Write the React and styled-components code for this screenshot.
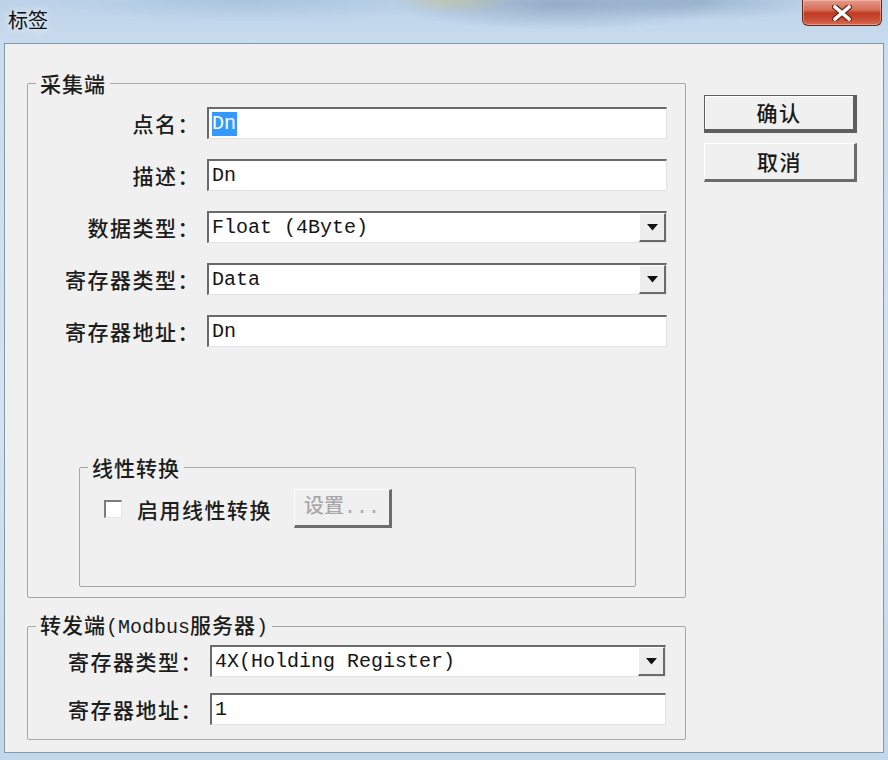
import React from 'react';
import styled, { createGlobalStyle, css } from 'styled-components';

const CJK = `"Noto Sans CJK SC", "Noto Sans", sans-serif`;
const MONO = `"Liberation Mono", "Noto Sans CJK SC", monospace`;

const GlobalStyle = createGlobalStyle`
  html, body {
    margin: 0;
    padding: 0;
  }
  body {
    width: 888px;
    height: 760px;
    overflow: hidden;
    background: #c4d8ec;
    font-family: ${CJK};
  }
`;

const Window = styled.div`
  width: 888px;
  height: 760px;
  display: flex;
  flex-direction: column;
  background:
    radial-gradient(ellipse 170px 26px at 560px 4px, rgba(70, 100, 140, 0.35), transparent),
    radial-gradient(ellipse 120px 18px at 700px 2px, rgba(90, 120, 160, 0.3), transparent),
    radial-gradient(ellipse 60px 14px at 455px 0px, rgba(230, 210, 120, 0.45), transparent),
    radial-gradient(ellipse 200px 22px at 250px 0px, rgba(150, 180, 215, 0.5), transparent),
    linear-gradient(180deg, #bcd2e8 0%, #cadcee 6%, #d3e3f2 55%, #c3d7eb 100%);
`;

const TitleBar = styled.div`
  height: 43px;
  flex: none;
  display: flex;
  align-items: flex-start;
  justify-content: space-between;
  padding: 0 6px 0 8px;
  box-sizing: border-box;
`;

const Title = styled.div`
  margin-top: 8px;
  font: 400 20px/24px ${CJK};
  color: #101010;
  text-shadow: 0 0 8px rgba(255, 255, 255, 0.95);
`;

const CloseButton = styled.div`
  width: 80px;
  height: 26px;
  box-sizing: border-box;
  display: flex;
  align-items: center;
  justify-content: center;
  border: 1px solid #5d2a22;
  border-top: none;
  border-radius: 0 0 6px 6px;
  background: linear-gradient(180deg, #e39a88 0%, #d66e56 40%, #bf3a23 52%, #cb4f37 80%, #d96f53 100%);
  box-shadow: inset 0 0 0 1px rgba(255, 210, 200, 0.45);
`;

const Client = styled.div`
  flex: 1;
  margin: 0 4px 7px 4px;
  border: 1px solid #8397ad;
  background: #f0f0f0;
  display: flex;
  align-items: flex-start;
  gap: 18px;
  padding: 28px 0 0 22px;
  box-sizing: border-box;
`;

const LeftColumn = styled.div`
  width: 659px;
  display: flex;
  flex-direction: column;
  gap: 15px;
`;

const RightColumn = styled.div`
  margin-top: 23px;
  display: flex;
  flex-direction: column;
  gap: 10px;
`;

const GroupBox = styled.fieldset`
  margin: 0;
  min-width: 0;
  box-sizing: border-box;
  width: ${(p) => p.$width}px;
  margin-left: ${(p) => p.$left || 0}px;
  margin-top: ${(p) => p.$top || 0}px;
  padding: ${(p) => p.$pad};
  border: 1px solid #a7a7a7;
  border-radius: 2px;
`;

const Legend = styled.legend`
  margin-left: 8px;
  padding: 0 4px;
  font: 500 21px/22px ${CJK};
  letter-spacing: 1px;
  color: #1c1c1c;
`;

const Ascii = styled.span`
  font: 500 20px/22px ${MONO};
  letter-spacing: 0;
`;

const FormGrid = styled.div`
  display: grid;
  grid-template-columns: ${(p) => p.$label}px ${(p) => p.$field}px;
  column-gap: 7px;
  row-gap: ${(p) => p.$gap}px;
  align-items: center;
`;

const Label = styled.label`
  text-align: right;
  white-space: nowrap;
  font: 500 21px/32px ${CJK};
  letter-spacing: 1.5px;
  color: #1c1c1c;
`;

const TextBox = styled.div`
  height: 32px;
  box-sizing: border-box;
  display: flex;
  align-items: center;
  background: #fff;
  border-style: solid;
  border-width: 2px 1px 1px 2px;
  border-color: #6a6a6a #e2e2e2 #e2e2e2 #6a6a6a;
  padding-left: 3px;
  font: 20px/28px ${MONO};
  color: #151515;
  white-space: pre;
`;

const Selected = styled.span`
  background: #3399ff;
  color: #fff;
  line-height: 24px;
  padding-right: 1px;
`;

const ComboText = styled.span`
  flex: 1;
`;

const DropArrow = styled.span`
  width: 27px;
  align-self: stretch;
  box-sizing: border-box;
  display: flex;
  align-items: center;
  justify-content: center;
  background: #ededed;
  border-style: solid;
  border-width: 1px 2px 2px 1px;
  border-color: #ffffff #6a6a6a #6a6a6a #ffffff;
`;

const PushButton = styled.button`
  width: ${(p) => p.$w}px;
  height: ${(p) => p.$h}px;
  box-sizing: border-box;
  padding: 0;
  background: #f0f0f0;
  font: 500 21px/1 ${CJK};
  letter-spacing: 1.5px;
  color: #1a1a1a;
  border-style: solid;
  border-width: 1px 3px 3px 1px;
  border-color: #ffffff #6c6c6c #6c6c6c #ffffff;
  ${(p) =>
    p.$default &&
    css`
      border-width: 1px 4px 4px 1px;
      border-color: #5e5e5e;
      box-shadow: inset 1px 1px 0 #ffffff;
    `}
  ${(p) =>
    p.disabled &&
    css`
      color: #a8a8a8;
      font-family: ${MONO};
      font-size: 20px;
      letter-spacing: 0;
    `}
`;

const CheckRow = styled.div`
  display: flex;
  align-items: center;
  padding-left: 24px;
`;

const CheckBox = styled.span`
  width: 18px;
  height: 18px;
  box-sizing: border-box;
  background: #fff;
  border-style: solid;
  border-width: 2px 1px 1px 2px;
  border-color: #7c7c7c #e6e6e6 #e6e6e6 #7c7c7c;
  margin-right: 15px;
`;

const CheckLabel = styled.span`
  font: 500 21px/32px ${CJK};
  letter-spacing: 1.5px;
  color: #1c1c1c;
  margin-right: 22px;
`;

const Arrow = () => (
  <svg width="11" height="7" viewBox="0 0 11 7">
    <polygon points="0,0 11,0 5.5,6.5" fill="#111" />
  </svg>
);

const CloseIcon = () => (
  <svg width="20" height="16" viewBox="0 0 20 16">
    <path d="M3 2 L17 14 M17 2 L3 14" stroke="#6b2a20" strokeWidth="6" strokeLinecap="round" />
    <path d="M3 2 L17 14 M17 2 L3 14" stroke="#ffffff" strokeWidth="3.6" strokeLinecap="round" />
  </svg>
);

const Combo = ({ value }) => (
  <TextBox>
    <ComboText>{value}</ComboText>
    <DropArrow>
      <Arrow />
    </DropArrow>
  </TextBox>
);

const App = () => (
  <>
    <GlobalStyle />
    <Window>
      <TitleBar>
        <Title>标签</Title>
        <CloseButton>
          <CloseIcon />
        </CloseButton>
      </TitleBar>
      <Client>
        <LeftColumn>
          <GroupBox $width={659} $pad="13px 18px 10px 0">
            <Legend>采集端</Legend>
            <FormGrid $label={172} $field={460} $gap={20}>
              <Label>点名：</Label>
              <TextBox>
                <Selected>Dn</Selected>
              </TextBox>
              <Label>描述：</Label>
              <TextBox>Dn</TextBox>
              <Label>数据类型：</Label>
              <Combo value="Float (4Byte)" />
              <Label>寄存器类型：</Label>
              <Combo value="Data" />
              <Label>寄存器地址：</Label>
              <TextBox>Dn</TextBox>
            </FormGrid>
            <GroupBox $width={557} $left={51} $top={109} $pad="11px 0 58px 0">
              <Legend>线性转换</Legend>
              <CheckRow>
                <CheckBox />
                <CheckLabel>启用线性转换</CheckLabel>
                <PushButton $w={98} $h={39} disabled>
                  设置...
                </PushButton>
              </CheckRow>
            </GroupBox>
          </GroupBox>
          <GroupBox $width={659} $pad="6px 19px 14px 0">
            <Legend>
              转发端<Ascii>(Modbus</Ascii>服务器<Ascii>)</Ascii>
            </Legend>
            <FormGrid $label={175} $field={456} $gap={16}>
              <Label>寄存器类型：</Label>
              <Combo value="4X(Holding Register)" />
              <Label>寄存器地址：</Label>
              <TextBox>1</TextBox>
            </FormGrid>
          </GroupBox>
        </LeftColumn>
        <RightColumn>
          <PushButton $w={153} $h={38} $default>
            确认
          </PushButton>
          <PushButton $w={153} $h={39}>
            取消
          </PushButton>
        </RightColumn>
      </Client>
    </Window>
  </>
);

export default App;
